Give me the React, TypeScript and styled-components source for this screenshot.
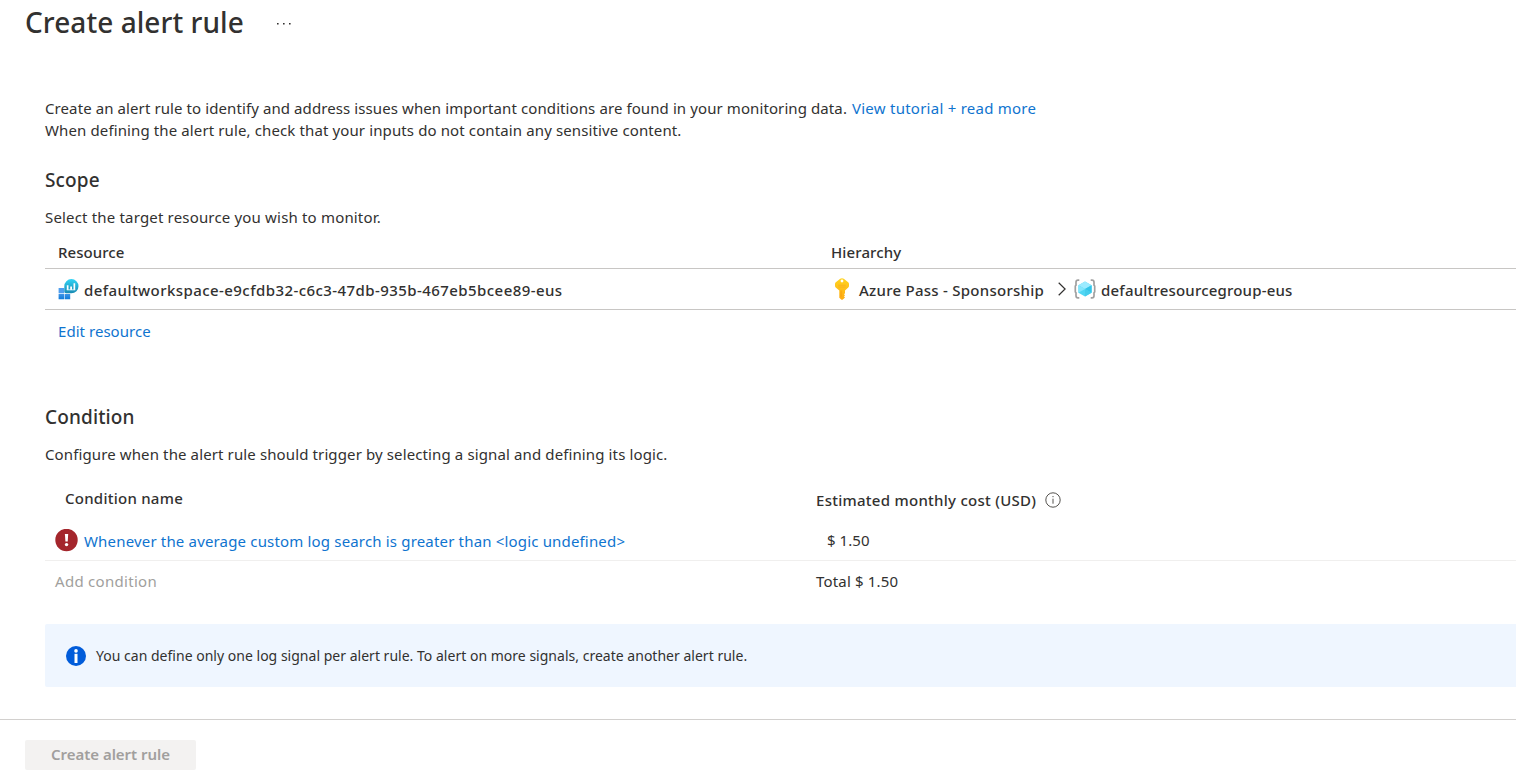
import React from "react";
import styled, { createGlobalStyle } from "styled-components";

const GlobalStyle = createGlobalStyle`
  *, *::before, *::after { box-sizing: border-box; }
  html, body { margin: 0; padding: 0; overflow: hidden; background: #fff; }
  body {
    font-family: "Segoe UI", "Noto Sans", "Open Sans", sans-serif;
    font-size: 15px;
    line-height: 22px;
    color: #323130;
  }
`;

const Page = styled.div`
  display: flex;
  flex-direction: column;
  width: 100%;
  height: 780px;
  overflow: hidden;
`;

const Header = styled.header`
  display: flex;
  align-items: center;
  gap: 32px;
  height: 44px;
  padding-left: 25px;
`;

const Title = styled.h1`
  margin: 0;
  font-size: 28px;
  font-weight: 500;
  line-height: 44px;
  letter-spacing: 0.06px;
  white-space: nowrap;
`;

const MoreButton = styled.button`
  display: flex;
  padding: 3px 0 0;
  border: 0;
  background: none;
`;

const Content = styled.main`
  display: flex;
  flex-direction: column;
  flex: 1;
  padding: 53px 0 0 45px;
`;

const Text = styled.span<{ $track?: number }>`
  display: block;
  white-space: nowrap;
  letter-spacing: ${(p) => p.$track ?? 0.12}px;
`;

const Strong = styled(Text)`
  font-weight: 500;
`;

const Link = styled.a<{ $track?: number }>`
  color: #0f74cf;
  text-decoration: none;
  white-space: nowrap;
  letter-spacing: ${(p) => p.$track ?? 0.15}px;
`;

const Intro = styled.div`
  display: flex;
  flex-direction: column;
`;

const IntroLine = styled.div`
  display: flex;
  gap: 5px;
  height: 22px;
`;

const Section = styled.section<{ $top: number }>`
  display: flex;
  flex-direction: column;
  margin-top: ${(p) => p.$top}px;
`;

const SectionTitle = styled.h2`
  margin: 0 0 13px;
  font-size: 19px;
  font-weight: 500;
  line-height: 26px;
  letter-spacing: 0.13px;
`;

const ScopeRow = styled.div<{ $height: number; $ruled?: boolean }>`
  display: grid;
  grid-template-columns: 773px 1fr;
  align-items: center;
  height: ${(p) => p.$height}px;
  padding-left: 13px;
  border-bottom: ${(p) => (p.$ruled ? "1px solid #c8c6c4" : "0")};
`;

const ScopeHeader = styled(ScopeRow)`
  margin-top: 9px;
  padding-bottom: 2px;
`;

const ScopeFooter = styled(ScopeRow)`
  padding-bottom: 2px;
`;

const ResourceCell = styled.div`
  display: flex;
  align-items: center;
  gap: 5px;
`;

const ResourceName = styled(Strong)`
  padding-top: 2px;
`;

const HierarchyCell = styled.div`
  display: flex;
  align-items: center;
  padding-left: 4px;
`;

const SubscriptionName = styled(ResourceName)`
  margin: 0 14px 0 10px;
`;

const GroupName = styled(ResourceName)`
  margin-left: 5px;
`;

const Glyph = styled.svg`
  display: block;
  flex: none;
`;

const GroupGlyph = styled(Glyph)`
  margin-left: 8px;
`;

const ConditionGrid = styled.div<{ $height: number; $ruled?: boolean }>`
  display: grid;
  grid-template-columns: 771px 1fr;
  height: ${(p) => p.$height}px;
  border-bottom: ${(p) => (p.$ruled ? "1px solid #f0efee" : "0")};
`;

const ConditionCell = styled.div<{ $left?: number; $top: number; $gap?: number }>`
  display: flex;
  align-items: flex-start;
  gap: ${(p) => p.$gap ?? 0}px;
  padding: ${(p) => p.$top}px 0 0 ${(p) => p.$left ?? 0}px;
`;

const ConditionLink = styled(Link)`
  padding-top: 1px;
`;

const HintGlyph = styled(Glyph)`
  margin-top: 3px;
`;

const Muted = styled(Text)`
  color: #a19f9d;
`;

const InfoBar = styled.div`
  display: flex;
  align-items: center;
  gap: 10px;
  height: 63px;
  margin-top: 23px;
  padding-left: 21px;
  border-radius: 2px 0 0 2px;
  background: #eff6ff;
`;

const InfoText = styled(Text)`
  font-size: 14px;
`;

const Footer = styled.footer`
  height: 61px;
  padding: 20px 0 0 25px;
  border-top: 1px solid #d2d0ce;
`;

const SubmitButton = styled.button`
  display: flex;
  align-items: center;
  justify-content: center;
  width: 171px;
  height: 30px;
  padding: 0 0 2px;
  border: 0;
  border-radius: 2px;
  background: #f3f2f1;
  color: #a19f9d;
  font: 600 15px/22px "Segoe UI", "Noto Sans", sans-serif;
  letter-spacing: -0.02px;
`;

const WorkspaceIcon = () => (
  <Glyph width="21" height="21" viewBox="0 0 21 21">
    <defs>
      <linearGradient id="ws-b" x1="0" y1="0" x2="0" y2="1">
        <stop offset="0" stopColor="#3f94e8" />
        <stop offset="1" stopColor="#0f7bd8" />
      </linearGradient>
      <linearGradient id="ws-c" x1="0" y1="0" x2="0" y2="1">
        <stop offset="0" stopColor="#32d4f5" />
        <stop offset="1" stopColor="#198ab3" />
      </linearGradient>
    </defs>
    <path d="M.6 9h5.600v5.300H.6z" fill="#4f9eee" />
    <path d="M.6 14.900h5.600v5.300H.6zM6.800 14.900h5.400v5.300H6.800z" fill="url(#ws-b)" />
    <path
      d="M13.400.1a7.100 7.100 0 1 1 0 14.200H8a1.700 1.700 0 0 1-1.700-1.700V7.200A7.100 7.100 0 0 1 13.400.1z"
      fill="url(#ws-c)"
    />
    <path
      d="M8.800 6.300h1.700v4.800H8.800zM12.200 7.600h1.800v3.500h-1.800zM15.500 4.300h1.700v6.800h-1.700z"
      fill="#fff"
    />
    <path d="M8.800 10.400h8.400v.9H8.800z" fill="#dff6fb" />
  </Glyph>
);

const KeyIcon = () => (
  <Glyph width="14" height="22" viewBox="0 0 14 22">
    <defs>
      <linearGradient id="key" x1="0" y1="0" x2="0" y2="1">
        <stop offset="0" stopColor="#ffd41f" />
        <stop offset="1" stopColor="#feab15" />
      </linearGradient>
    </defs>
    <path
      d="M5.200.7Q7-.4 8.800.7l4.400 3.600q.8.700.8 1.700v2q0 .9-.7 1.500L10 12.400v2.900l-1 1 1 1-1 1.100 1 1-2.200 2q-.8.700-1.600 0L4.300 19.700v-7.300L.7 9.500Q0 8.900 0 8V6q0-1 .8-1.700z"
      fill="url(#key)"
    />
    <circle cx="7" cy="3" r="1.400" fill="#fff" />
    <path d="M3.200 7.300h7.600M3.200 9h7.600" stroke="#f9b01c" strokeWidth=".8" />
    <path d="M6.100 12.500v6.300" stroke="#f79d12" strokeWidth=".9" />
  </Glyph>
);

const ResourceGroupIcon = () => (
  <GroupGlyph width="22" height="20" viewBox="0 0 22 20">
    <path
      d="M5.300 1.100H4Q2 1.100 2 3.200v3L1.300 7v6l.7.800v3Q2 18.900 4 18.900h1.300"
      fill="none"
      stroke="#a0a0a0"
      strokeWidth="1.700"
    />
    <path
      d="M16.700 1.100H18q2 0 2 2.100v3l.7.800v6l-.7.800v3q0 2.100-2 2.100h-1.300"
      fill="none"
      stroke="#a0a0a0"
      strokeWidth="1.700"
    />
    <path d="M11 2.400l6.600 3.800v7.600L11 17.600l-6.600-3.800V6.200z" fill="#50d6f3" />
    <path d="M11 2.400l6.600 3.800L11 10 4.400 6.200z" fill="#9cebff" />
    <path d="M4.400 6.200L11 10l-6.600 3.800z" fill="#83e6fc" />
    <path d="M17.600 6.200v7.600L11 10z" fill="#32c4e8" />
    <path d="M11 10l6.600 3.800L11 17.600z" fill="#45cdec" />
  </GroupGlyph>
);

const Chevron = () => (
  <Glyph width="8" height="14" viewBox="0 0 8 14">
    <path d="M.7.700L7.100 7 .7 13.300" fill="none" stroke="#323130" strokeWidth="1.200" />
  </Glyph>
);

const ErrorIcon = () => (
  <Glyph width="23" height="23" viewBox="0 0 23 23">
    <circle cx="11.500" cy="11" r="11.200" fill="#a4262c" />
    <path d="M9.900 5h3.300l-.5 7.600h-2.300z" fill="#fff" />
    <circle cx="11.550" cy="15.600" r="1.700" fill="#fff" />
  </Glyph>
);

const HintIcon = () => (
  <HintGlyph width="16" height="16" viewBox="0 0 16 16">
    <circle cx="8" cy="8" r="7.200" fill="none" stroke="#55534f" strokeWidth="1" />
    <path d="M8 6.700v5M8 4v1.200" stroke="#55534f" strokeWidth="1" />
  </HintGlyph>
);

const InfoIcon = () => (
  <Glyph width="20" height="20" viewBox="0 0 20 20">
    <circle cx="10" cy="10" r="10" fill="#015cda" />
    <circle cx="10" cy="4.900" r="1.800" fill="#fff" />
    <path d="M8.500 7.800h3V17h-3z" fill="#fff" />
  </Glyph>
);

const MoreDots = () => (
  <Glyph width="15" height="3" viewBox="0 0 15 3">
    <path d="M1 1h1.600v1.600H1zM7 1h1.600v1.600H7zM13 1h1.600v1.600H13z" fill="#323130" />
  </Glyph>
);

export default function App() {
  return (
    <Page>
      <GlobalStyle />
      <Header>
        <Title>Create alert rule</Title>
        <MoreButton aria-label="More actions">
          <MoreDots />
        </MoreButton>
      </Header>
      <Content>
        <Intro>
          <IntroLine>
            <Text $track={0.095}>
              Create an alert rule to identify and address issues when important conditions are found in your
              monitoring data.
            </Text>
            <Link $track={0.25}>View tutorial + read more</Link>
          </IntroLine>
          <IntroLine>
            <Text>When defining the alert rule, check that your inputs do not contain any sensitive content.</Text>
          </IntroLine>
        </Intro>

        <Section $top={26}>
          <SectionTitle>Scope</SectionTitle>
          <Text $track={0.175}>Select the target resource you wish to monitor.</Text>
          <ScopeHeader $height={32} $ruled>
            <Strong $track={0.05}>Resource</Strong>
            <Strong $track={0.12}>Hierarchy</Strong>
          </ScopeHeader>
          <ScopeRow $height={41} $ruled>
            <ResourceCell>
              <WorkspaceIcon />
              <ResourceName $track={0.43}>defaultworkspace-e9cfdb32-c6c3-47db-935b-467eb5bcee89-eus</ResourceName>
            </ResourceCell>
            <HierarchyCell>
              <KeyIcon />
              <SubscriptionName $track={0.26}>Azure Pass - Sponsorship</SubscriptionName>
              <Chevron />
              <ResourceGroupIcon />
              <GroupName $track={0.19}>defaultresourcegroup-eus</GroupName>
            </HierarchyCell>
          </ScopeRow>
          <ScopeFooter $height={43}>
            <Link $track={0.04}>Edit resource</Link>
          </ScopeFooter>
        </Section>

        <Section $top={51}>
          <SectionTitle>Condition</SectionTitle>
          <Text>Configure when the alert rule should trigger by selecting a signal and defining its logic.</Text>
          <ConditionGrid $height={54}>
            <ConditionCell $left={20} $top={22}>
              <Strong $track={0.25}>Condition name</Strong>
            </ConditionCell>
            <ConditionCell $top={24} $gap={9}>
              <Strong $track={0.27}>Estimated monthly cost (USD)</Strong>
              <HintIcon />
            </ConditionCell>
          </ConditionGrid>
          <ConditionGrid $height={42} $ruled>
            <ConditionCell $left={10} $top={10} $gap={6}>
              <ErrorIcon />
              <ConditionLink $track={0.17}>
                Whenever the average custom log search is greater than &lt;logic undefined&gt;
              </ConditionLink>
            </ConditionCell>
            <ConditionCell $left={11} $top={10}>
              <Text $track={0.05}>$ 1.50</Text>
            </ConditionCell>
          </ConditionGrid>
          <ConditionGrid $height={40}>
            <ConditionCell $left={10} $top={9}>
              <Muted $track={0.29}>Add condition</Muted>
            </ConditionCell>
            <ConditionCell $top={9}>
              <Text $track={0.17}>Total $ 1.50</Text>
            </ConditionCell>
          </ConditionGrid>
          <InfoBar>
            <InfoIcon />
            <InfoText $track={0.015}>
              You can define only one log signal per alert rule. To alert on more signals, create another alert rule.
            </InfoText>
          </InfoBar>
        </Section>
      </Content>
      <Footer>
        <SubmitButton disabled>Create alert rule</SubmitButton>
      </Footer>
    </Page>
  );
}
